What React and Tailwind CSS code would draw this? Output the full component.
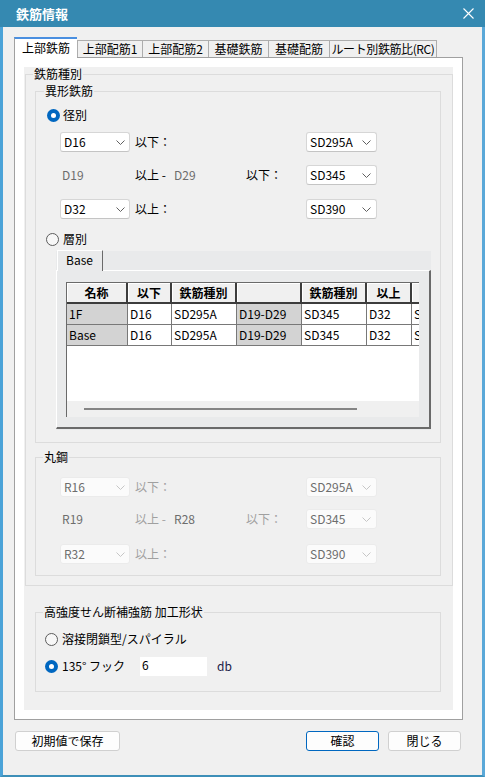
import React from 'react';

const FONT = "font-['Noto_Sans_CJK_JP',sans-serif]";

function Chevron({ color = '#606060' }) {
  return (
    <svg width="9" height="5" viewBox="0 0 9 5" className="shrink-0">
      <polyline points="0.5,0.5 4.5,4.5 8.5,0.5" fill="none" stroke={color} strokeWidth="1" />
    </svg>
  );
}

function Combo({ value, wide, disabled }) {
  const size = wide ? 'w-[71px] pl-[3px] pr-[5px]' : 'w-[70px] pl-[3px] pr-[4px]';
  const skin = disabled
    ? 'bg-[#fbfbfb] border-[#ebebeb] text-[#6d6d6d]'
    : 'bg-white border-[#d6d6d6] border-b-[#c4c4c4] text-black';
  return (
    <div className={`${size} ${skin} h-[20px] border rounded-[3px] flex items-center justify-between shrink-0`}>
      <span>{value}</span>
      <Chevron color={disabled ? '#c6c6c6' : '#606060'} />
    </div>
  );
}

function Radio({ checked }) {
  if (checked) {
    return (
      <span className="w-[13px] h-[13px] rounded-full bg-[#0067c0] flex items-center justify-center shrink-0">
        <span className="w-[5px] h-[5px] rounded-full bg-white" />
      </span>
    );
  }
  return <span className="w-[13px] h-[13px] rounded-full border border-[#5c5c5c] bg-[#f7f7f7] shrink-0" />;
}

function SizeRows({ p, disabled, gaps }) {
  const label = disabled ? 'text-[#a0a0a0]' : 'text-black';
  const mid = 'text-[#6d6d6d]';
  return (
    <>
      <div className={`${gaps[0]} h-[20px] pl-[24px] flex items-center`}>
        <div className="w-[75px]"><Combo value={`${p}16`} disabled={disabled} /></div>
        <div className={`w-[111px] ${label}`}>以下：</div>
        <div className="w-[60px]" />
        <Combo value="SD295A" wide disabled={disabled} />
      </div>
      <div className={`${gaps[1]} h-[20px] pl-[24px] flex items-center`}>
        <div className={`w-[75px] pl-[2px] ${mid}`}>{p}19</div>
        <div className="w-[111px] flex">
          <span className={`w-[39px] ${label}`}>以上 -</span>
          <span className={mid}>{p}{p === 'D' ? '29' : '28'}</span>
        </div>
        <div className={`w-[60px] ${label}`}>以下：</div>
        <Combo value="SD345" wide disabled={disabled} />
      </div>
      <div className={`${gaps[2]} h-[20px] pl-[24px] flex items-center`}>
        <div className="w-[75px]"><Combo value={`${p}32`} disabled={disabled} /></div>
        <div className={`w-[111px] ${label}`}>以上：</div>
        <div className="w-[60px]" />
        <Combo value="SD390" wide disabled={disabled} />
      </div>
    </>
  );
}

const COLS = [
  { w: 'w-[61px]', h: '名称', gray: true },
  { w: 'w-[44px]', h: '以下' },
  { w: 'w-[65px]', h: '鉄筋種別' },
  { w: 'w-[65px]', h: '', gray: true },
  { w: 'w-[65px]', h: '鉄筋種別' },
  { w: 'w-[45px]', h: '以上' },
  { w: 'w-[65px]', h: '鉄筋種別' },
];

const ROWS = [
  ['1F', 'D16', 'SD295A', 'D19-D29', 'SD345', 'D32', 'SD390'],
  ['Base', 'D16', 'SD295A', 'D19-D29', 'SD345', 'D32', 'SD390'],
];

function FloorGrid() {
  return (
    <div className="w-[353px] h-[135px] overflow-hidden bg-white flex flex-col border-l border-t border-[#6a6a6a]">
      <div className="flex shrink-0">
        {COLS.map((c, i) => (
          <div
            key={i}
            className={`${c.w} h-[21px] shrink-0 bg-[#f0f0f0] border-r-2 border-b-2 border-[#3c3c3c] shadow-[inset_1px_1px_0_#ffffff] flex items-center justify-center font-bold whitespace-nowrap`}
          >
            {c.h}
          </div>
        ))}
      </div>
      {ROWS.map((r, ri) => (
        <div key={ri} className="flex shrink-0">
          {r.map((v, ci) => (
            <div
              key={ci}
              className={`${COLS[ci].w} h-[21px] shrink-0 border-r border-b border-[#787878] flex items-center pl-[2px] whitespace-nowrap ${COLS[ci].gray ? 'bg-[#d3d3d3]' : 'bg-white'}`}
            >
              {v}
            </div>
          ))}
        </div>
      ))}
      <div className="mt-auto h-[16px] bg-[#f0f0f0] shrink-0 pt-[7px]">
        <div className="ml-[17px] w-[273px] h-[2px] bg-[#858585]" />
      </div>
    </div>
  );
}

function FloorTabs() {
  return (
    <div className="mt-[5px] ml-[20px] w-[375px] h-[179px] bg-[#e9eaeb] flex flex-col">
      <div className="h-[20px] flex items-end -mb-px relative">
        <div className="ml-px w-[46px] h-[21px] border-l border-t border-white border-r border-r-[#6a6a6a] bg-[#e9eaeb] flex items-center pl-[8px] pb-[2px]">
          Base
        </div>
      </div>
      <div className="h-[159px] border-t border-l border-white border-r-2 border-b-2 border-r-[#6a6a6a] border-b-[#6a6a6a] pl-[9px] pt-[11px]">
        <FloorGrid />
      </div>
    </div>
  );
}

const TABS = [
  { t: '上部鉄筋', w: 'w-[63px]' },
  { t: '上部配筋1', w: 'w-[65px]' },
  { t: '上部配筋2', w: 'w-[66px]' },
  { t: '基礎鉄筋', w: 'w-[60px]' },
  { t: '基礎配筋', w: 'w-[61px]' },
  { t: 'ルート別鉄筋比(RC)', w: 'w-[108px]' },
];

export default function App() {
  return (
    <div className={`${FONT} w-[485px] h-[777px] flex flex-col text-[12px] leading-[14px] text-black`}>
      <div className="h-[27px] bg-[#3589b1] flex items-center justify-between pl-[16px] pr-[11px] shrink-0">
        <span className="text-white font-bold text-[13px]">鉄筋情報</span>
        <svg width="11" height="11" viewBox="0 0 11 11">
          <path d="M0.5 0.5 L10.5 10.5 M10.5 0.5 L0.5 10.5" stroke="#ffffff" strokeWidth="1.1" />
        </svg>
      </div>

      <div className="flex-1 bg-[#f0f0f0] border-l-[3px] border-r-[3px] border-b-2 border-l-[#4ba3d8] border-r-[#5aa8d8] border-b-[#3d8fb8] pl-[11px] pt-[11px] flex flex-col">
        <div className="h-[20px] flex items-end -mb-px relative z-10">
          {TABS.map((tab, i) =>
            i === 0 ? (
              <div
                key={i}
                className={`${tab.w} h-[21px] bg-white border-l border-[#a0a0a0] border-t-2 border-t-[#4a8fe0] flex items-center justify-center pb-px whitespace-nowrap`}
              >
                {tab.t}
              </div>
            ) : (
              <div
                key={i}
                className={`${tab.w} h-[17px] mb-px bg-[#f0f0f0] border-l border-t border-[#adadad] flex items-center justify-center whitespace-nowrap overflow-hidden ${i === TABS.length - 1 ? 'border-r tracking-[-0.4px]' : ''}`}
              >
                {tab.t}
              </div>
            )
          )}
        </div>

        <div className="w-[449px] h-[663px] border border-[#a0a0a0] bg-white p-[9px] shrink-0">
          <div className="h-[643px] bg-[#f0f0f0] flex flex-col">
            <fieldset className="ml-px w-[428px] border border-[#dcdcdc] pb-[9px]">
              <legend className="ml-[7px] px-px leading-[14px]">鉄筋種別</legend>

              <fieldset className="mt-[3px] ml-[9px] w-[406px] border border-[#dcdcdc] pb-[12px]">
                <legend className="ml-[8px] px-px leading-[14px]">異形鉄筋</legend>
                <div className="mt-[10px] h-[14px] pl-[11px] flex items-center gap-[3px]">
                  <Radio checked />
                  <span>径別</span>
                </div>
                <SizeRows p="D" gaps={['mt-[10px]', 'mt-[13px]', 'mt-[14px]']} />
                <div className="mt-[13px] h-[14px] pl-[10px] flex items-center gap-[4px]">
                  <Radio />
                  <span>層別</span>
                </div>
                <FloorTabs />
              </fieldset>

              <fieldset className="mt-[7px] ml-[9px] w-[406px] border border-[#dcdcdc] pb-[11px]">
                <legend className="ml-[7px] px-px leading-[14px]">丸鋼</legend>
                <SizeRows p="R" disabled gaps={['mt-[13px]', 'mt-[12px]', 'mt-[15px]']} />
              </fieldset>
            </fieldset>

            <fieldset className="mt-[19px] ml-[11px] w-[406px] border border-[#dcdcdc] pb-[15px]">
              <legend className="ml-[7px] px-px leading-[14px]">高強度せん断補強筋 加工形状</legend>
              <div className="mt-[13px] h-[14px] pl-[9px] flex items-center gap-[4px]">
                <Radio />
                <span>溶接閉鎖型/スパイラル</span>
              </div>
              <div className="mt-[10px] h-[20px] pl-[9px] flex items-center">
                <Radio checked />
                <span className="ml-[4px] w-[78px]">135° フック</span>
                <div className="w-[67px] h-[19px] bg-white pl-[2px] pt-[1px]">6</div>
                <span className="ml-[10px] text-[#202048]">db</span>
              </div>
            </fieldset>
          </div>
        </div>

        <div className="mt-[11px] h-[20px] flex items-center">
          <div className="ml-px w-[105px] h-[20px] rounded-[3px] border border-[#d0d0d0] bg-[#fdfdfd] flex items-center justify-center">
            初期値で保存
          </div>
          <div className="ml-[186px] w-[73px] h-[20px] rounded-[3px] border border-[#0067c0] bg-[#fdfdfd] flex items-center justify-center">
            確認
          </div>
          <div className="ml-[9px] w-[73px] h-[20px] rounded-[3px] border border-[#d0d0d0] bg-[#fdfdfd] flex items-center justify-center">
            閉じる
          </div>
        </div>
      </div>
    </div>
  );
}
